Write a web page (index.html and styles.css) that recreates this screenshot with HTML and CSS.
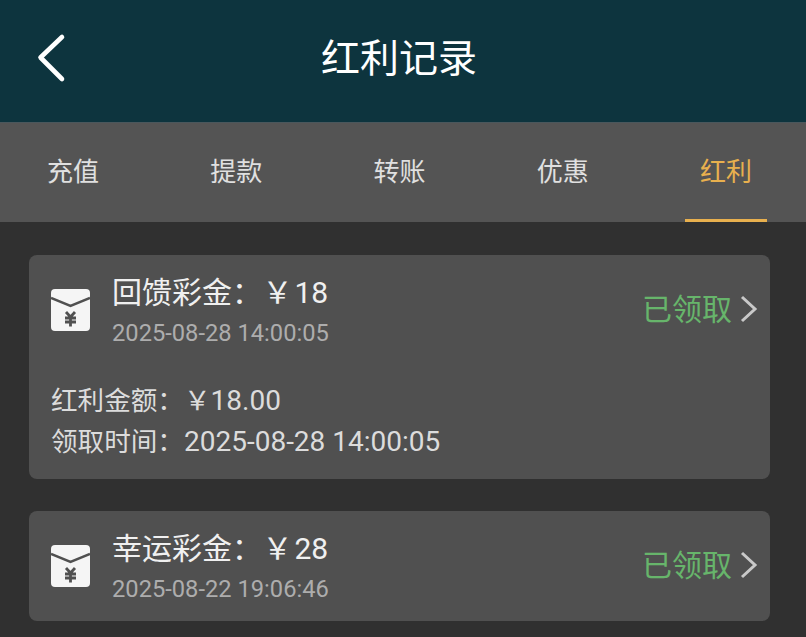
FILE: index.html
```html
<html>
    <head>
        <meta charset="utf-8">
        <link rel="stylesheet" href="styles.css">
    </head>
    <body>
        <div class="header">
            <svg class="back" width="30" height="50" viewBox="0 0 30 50">
                <path d="M25 4 L3.5 24.5 L25 46" fill="none" stroke="#fff" stroke-width="4.6" stroke-linecap="round" stroke-linejoin="round"/>
            </svg>
            <div class="title">红利记录</div>
        </div>
        <div class="tabs">
            <div class="tab">充值</div>
            <div class="tab">提款</div>
            <div class="tab">转账</div>
            <div class="tab">优惠</div>
            <div class="tab active">红利</div>
        </div>
        <div class="list">
            <div class="card">
                <div class="card-top">
                    <svg class="icon" width="39" height="42" viewBox="0 0 39 42">
                        <path class="env" d="M4 0 H35 A4 4 0 0 1 39 4 V38 A4 4 0 0 1 35 42 H4 A4 4 0 0 1 0 38 V4 A4 4 0 0 1 4 0 Z"/>
                        <path class="flap" d="M0 9 L19.5 17 L39 9"/>
                        <path class="yen" d="M15 23 L19.5 28 L24 23 M14 29 H25 M14 33 H25 M19.5 28 V37.5"/>
                    </svg>
                    <div class="info">
                        <div class="name">回馈彩金： <span class="cur">￥</span>18</div>
                        <div class="date">2025-08-28 14:00:05</div>
                    </div>
                    <div class="status">已领取</div>
                    <svg class="arrow" width="18" height="28" viewBox="0 0 18 28">
                        <path d="M2 2 L15 14 L2 26" fill="none" stroke="#c9c9c9" stroke-width="3"/>
                    </svg>
                </div>
                <div class="details">
                    <div class="line">红利金额：￥<span class="num">18.00</span></div>
                    <div class="line">领取时间：<span class="num">2025-08-28 14:00:05</span></div>
                </div>
            </div>
            <div class="card">
                <div class="card-top">
                    <svg class="icon" width="39" height="42" viewBox="0 0 39 42">
                        <path class="env" d="M4 0 H35 A4 4 0 0 1 39 4 V38 A4 4 0 0 1 35 42 H4 A4 4 0 0 1 0 38 V4 A4 4 0 0 1 4 0 Z"/>
                        <path class="flap" d="M0 9 L19.5 17 L39 9"/>
                        <path class="yen" d="M15 23 L19.5 28 L24 23 M14 29 H25 M14 33 H25 M19.5 28 V37.5"/>
                    </svg>
                    <div class="info">
                        <div class="name">幸运彩金： <span class="cur">￥</span>28</div>
                        <div class="date">2025-08-22 19:06:46</div>
                    </div>
                    <div class="status">已领取</div>
                    <svg class="arrow" width="18" height="28" viewBox="0 0 18 28">
                        <path d="M2 2 L15 14 L2 26" fill="none" stroke="#c9c9c9" stroke-width="3"/>
                    </svg>
                </div>
            </div>
        </div>
    </body>
</html>
```

FILE: styles.css
```css
* {
    margin: 0;
    padding: 0;
    box-sizing: border-box;
}

html,body {
    height: 100%;
    overflow: hidden;
}

body {
    background: #303030;
    font-family: Roboto, "Noto Sans CJK SC", sans-serif;
}

.header {
    height: 122px;
    background: #0d343e;
    display: flex;
    align-items: center;
    justify-content: center;
    position: relative;
}

.back {
    position: absolute;
    left: 37px;
    top: 33px;
}

.title {
    color: #fff;
    font-size: 39px;
    line-height: 116px;
    margin: 0 8px 4px 0;
}

.tabs {
    height: 100px;
    background: #545454;
    border-top: 1px solid #4a575c;
    display: flex;
    justify-content: space-between;
    padding: 0 39px 0 32px;
}

.tab {
    width: 82px;
    text-align: center;
    color: #e0e0e0;
    font-size: 26px;
    line-height: 99px;
}

.tab.active {
    color: #e8b04e;
    border-bottom: 3px solid #e8b04e;
}

.list {
    padding: 33px 36px 0 29px;
}

.card {
    background: #505050;
    border-radius: 8px;
    margin-bottom: 32px;
    padding: 0 12px 0 22px;
}

.card-top {
    height: 110px;
    display: flex;
    align-items: center;
}

.icon {
    flex: none;
    margin-right: 22px;
}

.env {
    fill: #f5f5f5;
}

.flap {
    fill: none;
    stroke: #505050;
    stroke-width: 2.5;
}

.yen {
    fill: none;
    stroke: #505050;
    stroke-width: 2.8;
}

.info {
    flex: 1;
    padding-top: 2px;
}

.name {
    color: #f0f0f0;
    font-size: 30px;
    line-height: 40px;
    margin-bottom: 4px;
    word-spacing: -7px;
}

.cur {
    margin-right: 2px;
}

.date {
    color: #adadad;
    font-size: 23.7px;
    line-height: 32px;
}

.status {
    color: #67b56b;
    font-size: 30px;
    margin: 0 8px 6px 0;
}

.arrow {
    margin-bottom: 2px;
}

.details {
    padding: 15px 0 0;
    height: 114px;
}

.line {
    color: #dcdcdc;
    font-size: 26.6px;
    line-height: 41px;
}

.num {
    font-size: 28px;
}
```
